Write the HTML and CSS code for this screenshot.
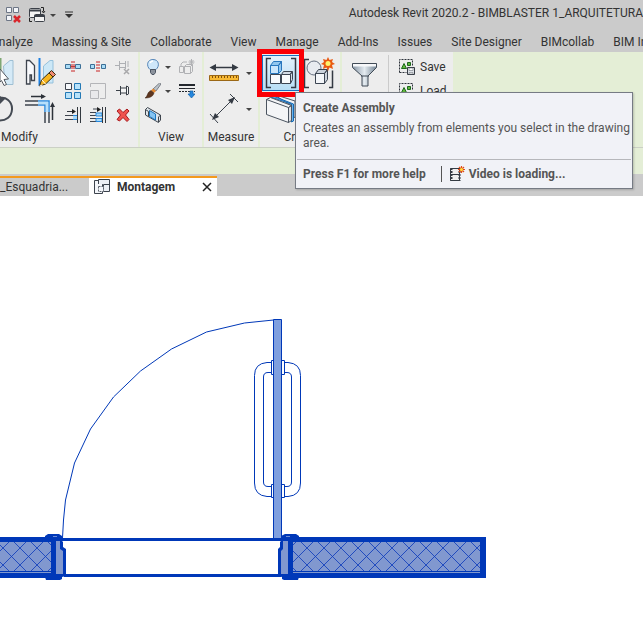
FILE: index.html
```html
<!DOCTYPE html>
<html lang="en">
<head>
<meta charset="utf-8">
<title>Autodesk Revit 2020.2</title>
<link rel="stylesheet" href="styles.css">
</head>
<body>
<header class="titlebar">
  <div class="quick">
    <button class="quick-btn" aria-label="Close inactive views">
      <svg width="18" height="18" viewBox="0 0 18 18"><g fill="#f3f5f9" stroke="#6d7686"><path d="M2.500 1.500h5v5h-5zM9.500 1.500h5v5h-5zM2.500 9.500h5v5h-5z"/></g><path d="M10 10l6 6M16 10l-6 6" stroke="#d8262c" stroke-width="2.500"/></svg>
    </button>
    <button class="quick-btn" aria-label="Switch windows">
      <svg width="18" height="18" viewBox="0 0 18 18"><g fill="#f3f3f3" stroke="#3b4048"><rect x="1.500" y="2.500" width="11" height="9" rx="1"/><path d="M1.500 4.500h11" stroke-width="2"/><rect x="6.500" y="8.500" width="10" height="7" rx="1"/><path d="M6.500 10h10" stroke-width="2"/></g><path d="M13 1.500h2.500v4M14 5l1.500 2L17 5M1.500 12v3.500H4" fill="none" stroke="#222"/></svg>
    </button>
    <button class="arrow-btn" aria-label="Window list"><span class="arrow"></span></button>
    <button class="arrow-btn" aria-label="Customize toolbar"><svg width="8" height="8" viewBox="0 0 8 8"><path d="M0 1h8" stroke="#333" stroke-width="1"/><path d="M0 3h8L4 7z" fill="#333"/></svg></button>
  </div>
  <h1 class="app-title">Autodesk Revit 2020.2 - BIMBLASTER 1_ARQUITETURA</h1>
</header>

<nav class="tabs" aria-label="Ribbon tabs">
  <a href="#">Analyze</a><a href="#">Massing &amp; Site</a><a href="#">Collaborate</a><a href="#">View</a><a href="#">Manage</a><a href="#">Add-Ins</a><a href="#">Issues</a><a href="#">Site Designer</a><a href="#">BIMcollab</a><a href="#">BIM Interoperability</a>
</nav>

<section class="ribbon" aria-label="Ribbon">
  <div class="panel modify">
    <div class="panel-body">
      <div class="big-col first">
        <button aria-label="Mirror pick axis"><svg width="16" height="32" viewBox="0 0 16 32"><path d="M0 1h1.500v14H0z" fill="#7fa874"/><path d="M3.500 9L10 3.500h3v24H5z" fill="#d5eaf7" stroke="#9ebfd3"/><path d="M0 12l8.500 10-4.500.500 2.500 5-2.500 1-2.500-5L0 25z" fill="#fff" stroke="#555a62"/></svg></button>
        <button aria-label="Rotate"><svg width="16" height="32" viewBox="0 0 16 32"><path d="M-3 6C6 2 12.500 9 12 16.500S6 28-2 27.500" fill="none" stroke="#454b54" stroke-width="2"/><path d="M0 3l5 3-5 5z" fill="#454b54"/></svg></button>
      </div>
      <div class="big-col">
        <button aria-label="Mirror draw axis"><svg width="32" height="32" viewBox="0 0 32 32"><path d="M2.500 3.500h3l5 5v15h-3v-5.500h-1.500v9h-3.500z" fill="#f8f9fc" stroke="#3e444e" stroke-width="1.300"/><path d="M29 3.500h-3L19.500 9v17H29z" fill="#cce8f7" stroke="#95c1dc"/><path d="M15.500 1v28" stroke="#1d7fe0" stroke-width="2"/><path d="M15.500 29l2-6L27 14l4 4-9.500 9z" fill="#f7b51e" stroke="#3a2c10"/><path d="M18 23l3.500 4M15.500 29l3-1" stroke="#fff"/><path d="M25 16l2.500-2.500 4 4L29 20z" fill="#ef8a72" stroke="#3a2c10"/></svg></button>
        <button aria-label="Trim or extend to corner"><svg width="32" height="32" viewBox="0 0 32 32"><g fill="none" stroke-width="1.500"><path d="M1 8h13M1 12h13M21 19v11M25 19v11" stroke="#3e444e"/><path d="M14 8h11v11M14 12h7v7" stroke="#2688de"/><path d="M14 10h9v9" stroke="#b7e0fb" stroke-width="2.500"/><path d="M7 3.500h13M28.500 27V13" stroke="#2d3239"/></g><path d="M17 1l5 2.500L17 6zM26 14l2.500-5 2.500 5z" fill="#2d3239"/></svg></button>
      </div>
      <div class="small-grid">
        <button aria-label="Split element"><svg width="16" height="16" viewBox="0 0 16 16"><path d="M.500 5.500h5v4h-5zM10.500 5.500h5v4h-5z" fill="#a9dcf6" stroke="#3c6f96"/><path d="M5.500 7.500h5" stroke="#c43a3a"/><path d="M7 2v11M9 2v11" stroke="#c92222" stroke-dasharray="2 1"/></svg></button>
        <button aria-label="Split with gap"><svg width="16" height="16" viewBox="0 0 16 16"><path d="M.500 5.500h4v4h-4zM11.500 5.500h4v4h-4z" fill="#a9dcf6" stroke="#3c6f96"/><path d="M7 2v11M9 2v11" stroke="#c92222" stroke-dasharray="2 1"/></svg></button>
        <button aria-label="Unpin"><svg width="16" height="16" viewBox="0 0 16 16"><path d="M0 6.500h4M4.500 2v9M4.500 4.500h6v4h-6M10.500 2v8M13 2v6" fill="none" stroke="#aeb0b4"/><path d="M9 10l5 5M14 10l-5 5" stroke="#a8a8aa" stroke-width="1.500"/></svg></button>
        <button aria-label="Array"><svg width="16" height="16" viewBox="0 0 16 16"><path d="M.500.500h6v6h-6z" fill="#f6f8fb" stroke="#3e444e"/><path d="M9.500.500h6v6h-6zM.500 9.500h6v6h-6zM9.500 9.500h6v6h-6z" fill="#b8e2fa" stroke="#2479b5"/></svg></button>
        <button aria-label="Scale"><svg width="16" height="16" viewBox="0 0 16 16"><path d="M.500 4V.500h15v15H10" fill="none" stroke="#b4b5b8"/><path d="M.500 7.500h8v8h-8z" fill="#e9e9eb" stroke="#b4b5b8"/></svg></button>
        <button aria-label="Pin"><svg width="16" height="16" viewBox="0 0 16 16"><path d="M1 7.500h4M5.500 3v9M5.500 5h6v5h-6M11.500 3v9l2-1V4z" fill="#f5f5f5" stroke="#3a4048"/></svg></button>
        <button aria-label="Trim single element"><svg width="16" height="16" viewBox="0 0 16 16"><path d="M0 8.500h8M0 12.500h8" stroke="#3e444e"/><path d="M8 8.500h4M8 12.500h4" stroke="#2688de"/><path d="M8 10.500h4" stroke="#a8d9f7" stroke-width="3"/><path d="M12.500 0v16M15.500 0v16M2 4.500h7" stroke="#333940"/><path d="M7 2l4 2.500L7 7z" fill="#222"/></svg></button>
        <button aria-label="Trim multiple elements"><svg width="16" height="16" viewBox="0 0 16 16"><path d="M0 5.500h6M0 8.500h6M0 11.500h6M0 14.500h6M3 2h6" stroke="#3e444e"/><path d="M6 6h6v3H6zM6 11.500h6v3H6z" fill="#a8d9f7" stroke="#2688de"/><path d="M12.500 0v16M15.500 0v16" stroke="#333940"/><path d="M7 0l4 2.500L7 5z" fill="#222"/></svg></button>
        <button aria-label="Delete"><svg width="16" height="16" viewBox="0 0 16 16"><path d="M2 4l2.500-2L8 5.500 12 2l2 2-3.500 4 3.500 4.500-2 2L8 10.500 4.500 14 2 12.500 5.500 8z" fill="#f0534f" stroke="#a8181c"/></svg></button>
      </div>
    </div>
    <h2>Modify</h2>
  </div>

  <div class="panel view">
    <div class="panel-body">
      <div class="view-grid">
        <button aria-label="Hide in view"><svg width="16" height="16" viewBox="0 0 16 16"><path d="M5 10.500C1 7 2 .500 8 .500s7 6.500 3 10z" fill="#cfe7fa" stroke="#5686b8"/><path d="M5 4q1-2 3-2" stroke="#fff" fill="none" stroke-width="1.500"/><path d="M5.500 10.500h5v3l-1.500 2H7l-1.500-2z" fill="#8b929c" stroke="#4b5462"/></svg></button>
        <button aria-label="Hide options"><span class="arrow"></span></button>
        <button aria-label="Displace elements"><svg width="16" height="16" viewBox="0 0 16 16"><path d="M.500 7.500h4v6h-4zM5.500 7.500l2-2h6v7l-2 2h-6zM5.500 7.500h6v7M11.500 7.500l2-2M2 7V5l2-2h4" fill="none" stroke="#b0b1b4"/><path d="M12.500 0v6M9.500 3h6M10.500 1l4 4M14.500 1l-4 4" stroke="#b0b1b4"/></svg></button>
        <button aria-label="Override graphics"><svg width="16" height="16" viewBox="0 0 16 16"><path d="M14.500 0l1.500 1-5 7-3-2z" fill="#bcc3ca" stroke="#565c64" stroke-width=".700"/><path d="M8 5.500L11 8 9 10 6 7.500z" fill="#e78a31"/><path d="M6 7.500L9 10c-1 4-5 5-9 5 3-2 2-6 6-7.500z" fill="#5d351f" stroke="#3d2519" stroke-width=".500"/></svg></button>
        <button aria-label="Override options"><span class="arrow"></span></button>
        <button aria-label="Linework"><svg width="16" height="16" viewBox="0 0 16 16"><path d="M0 2h16" stroke="#24282e" stroke-width="2"/><path d="M0 5.500h16" stroke="#24282e"/><path d="M0 8.500h16" stroke="#24282e" stroke-dasharray="2 1"/><path d="M11 8h3v3h2l-3.500 4L9 11h2z" fill="#2688de" stroke="#1261aa" stroke-width=".700"/></svg></button>
        <button aria-label="Selection box"><svg width="16" height="16" viewBox="0 0 16 16"><path d="M.500 2.500l2-2L15.500 8v5l-2 2.500L.500 8z" fill="#dfe5ea" stroke="#3d444d"/><path d="M4.500 3.500l6 3.500v6l-6-3.500z" fill="#86c4f2" stroke="#1c76c0"/><path d="M.500 2.500l3 2v5M13.500 15v-5l2-2" fill="none" stroke="#3d444d"/></svg></button>
      </div>
    </div>
    <h2>View</h2>
  </div>

  <div class="panel measure">
    <div class="panel-body">
      <div class="measure-grid">
        <button aria-label="Measure between two references"><svg width="32" height="32" viewBox="0 0 32 32"><path d="M5 10.500h22" stroke="#343a43" stroke-width="1.500"/><path d="M1.500 10.500L8 7v7zM30.500 10.500L24 7v7z" fill="#343a43"/><path d="M1.500 18.500h29v5h-29z" fill="#f7b934" stroke="#9b6816"/><path d="M4.500 19v2M7.500 19v2M10.500 19v2M13.500 19v2M16.500 19v2M19.500 19v2M22.500 19v2M25.500 19v2M28.500 19v2" stroke="#80500c"/></svg></button>
        <button aria-label="Measure options"><span class="arrow"></span></button>
        <button aria-label="Aligned dimension"><svg width="32" height="32" viewBox="0 0 32 32"><path d="M6 25L25 6M2 21l8 9M22 1l8 8" stroke="#3b424c"/><path d="M4 27l3-7 4 4zM27 4l-7 3 4 4z" fill="#343a43"/></svg></button>
        <button aria-label="Dimension options"><span class="arrow"></span></button>
      </div>
    </div>
    <h2>Measure</h2>
  </div>

  <div class="panel create">
    <div class="panel-body">
      <div class="create-grid">
        <button class="active" aria-label="Create assembly"><svg width="32" height="32" viewBox="0 0 32 32"><path d="M6 1.500H1.500v29H6M26 1.500h4.500v29H26" fill="none" stroke="#343a43" stroke-width="1.500"/><g stroke="#3c4552" stroke-linejoin="round"><path d="M16.500 17.500l2-3H27l-2 3zM25.500 17.500l2-3v8l-2 4z" fill="#d3dbe5"/><path d="M5.500 17.500h10v9h-10zM16.500 17.500h9v9h-9z" fill="#f8fafc"/><path d="M5.500 8.500h8v8h-8z" fill="#c9e6fc" stroke="#2776bd"/><path d="M5.500 8.500l3-4h8l-3 4zM13.500 8.500l3-4v9l-3 3z" fill="#91c7ef" stroke="#2776bd"/></g></svg></button>
        <button aria-label="Create group"><svg width="32" height="32" viewBox="0 0 32 32"><path d="M6 2.500H1.500v28H6M26 30.500h3.500v-17" fill="none" stroke="#343a43" stroke-width="1.500"/><circle cx="11" cy="11" r="7" fill="#e8ebf0" stroke="#667080"/><g fill="#f4f6f9" stroke="#3c4552" stroke-linejoin="round"><path d="M12.500 16.500h9v10h-9z"/><path d="M12.500 16.500l3-4h9l-3 4zM21.500 16.500l3-4v10l-3 4z" fill="#ccd3dc"/></g><path d="M25 0l1.500 3L30 2l-1 3 3 2-3 1 1 4-3.500-1.500L25 14l-1.500-3.500L20 12l1-4-3-1 3-2-1-3 3.500 1z" fill="#e95a13"/><circle cx="25" cy="6.500" r="2.500" fill="#fff36c"/></svg></button>
        <button aria-label="Create similar"><svg width="32" height="32" viewBox="0 0 32 32"><path d="M8 1l22 7v16l-3 2V13z" fill="#f0f2f5" stroke="#4b5460"/><path d="M5.500 4V2l23 9v17l-2 1V11z" fill="#66b3ef" stroke="#1768b0"/><path d="M1.500 6.500l4-2 21 8-3 2v15l-22-8z" fill="#f4f5f7" stroke="#4b5460"/><path d="M1.500 6.500l22 8 3-2v15l-3 2v-15" fill="#cdd4dd" fill-opacity=".5" stroke="#4b5460"/></svg></button>
      </div>
    </div>
    <h2>Create</h2>
  </div>

  <div class="panel select">
    <div class="panel-body">
      <button class="filter" aria-label="Filter"><svg width="32" height="32" viewBox="0 0 32 32"><defs><linearGradient id="steel"><stop offset="0" stop-color="#8796a5"/><stop offset=".5" stop-color="#e4ebf0"/><stop offset="1" stop-color="#718292"/></linearGradient></defs><path d="M3.500 6.500h24v4L19 19v10h-6V19l-9.500-8.500z" fill="url(#steel)" stroke="#414b56"/><path d="M4 7h23v2.500H4z" fill="#f7f8fa"/><path d="M12 19h8" stroke="#414b56"/></svg></button>
      <div class="selection-list">
        <button class="labelled"><svg width="16" height="16" viewBox="0 0 16 16"><path d="M.500 13.500V.500h13v6M.500 13.500h7" fill="none" stroke="#2c323a" stroke-dasharray="2 1"/><path d="M5 4.500l2.500 5h-5zM8.500 3.500h3v3h-3z" fill="#62b73c" stroke="#1d681c"/><path d="M8.500 8.500h7v7h-7z" fill="#dfe3e8" stroke="#363c44"/><path d="M10 9h4v2.500h-4zM10 13.500h4V15h-4z" fill="#fff" stroke="#59606a" stroke-width=".500"/></svg>Save</button>
        <button class="labelled"><svg width="16" height="16" viewBox="0 0 16 16"><path d="M.500 13.500V.500h13v6M.500 13.500h7" fill="none" stroke="#2c323a" stroke-dasharray="2 1"/><path d="M5 4.500l2.500 5h-5zM8.500 3.500h3v3h-3z" fill="#62b73c" stroke="#1d681c"/></svg>Load</button>
      </div>
    </div>
  </div>

  <aside class="tooltip" role="tooltip">
    <h3>Create Assembly</h3>
    <p>Creates an assembly from elements you select in the drawing area.</p>
    <footer>
      <span>Press F1 for more help</span>
      <span class="video"><svg width="16" height="16" viewBox="0 0 16 16"><path d="M1.500 2.500h9v12h-9z" fill="#eee" stroke="#353b43"/><path d="M2.500 2v13M10.500 2v13" stroke="#353b43" stroke-width="2" stroke-dasharray="2 1"/><path d="M3 8.500h7" stroke="#353b43"/><path d="M12.500 0v7M9 3.500h7M10 1l5 5M15 1l-5 5" stroke="#e04b16" stroke-width="1.200"/><circle cx="12.500" cy="3.500" r="1.500" fill="#ffdf39"/></svg>Video is loading...</span>
    </footer>
  </aside>
</section>

<div class="options-bar"></div>

<nav class="documents" aria-label="Open views">
  <button class="doc">_Esquadria...</button>
  <div class="doc current">
    <svg width="16" height="16" viewBox="0 0 16 16"><path d="M.500 1.500h8v13h-8z" fill="#f4f6fa" stroke="#3c434d"/><path d="M4.500 5V.500h11v12h-6v-7h6" fill="#edf0f5" stroke="#3c434d"/><path d="M4.500 7.500h5v5h-5z" fill="#f4f6fa" stroke="#5b626c" stroke-dasharray="2 1"/></svg>
    <span>Montagem</span>
    <button aria-label="Close view"><svg width="10" height="10" viewBox="0 0 10 10"><path d="M1 1l8 8M9 1L1 9" stroke="#222" stroke-width="1.500"/></svg></button>
  </div>
</nav>

<main class="canvas">
  <svg width="643" height="443" viewBox="0 196 643 443" role="img" aria-label="Plan of a door in a wall">
    <defs>
      <pattern id="hatch-left" x="20" y="548" width="17" height="17" patternUnits="userSpaceOnUse"><path d="M0 0l17 17M17 0L0 17" stroke="#0a39bb" stroke-width=".8"/></pattern>
      <pattern id="hatch-right" x="307" y="548" width="17" height="17" patternUnits="userSpaceOnUse"><path d="M0 0l17 17M17 0L0 17" stroke="#0a39bb" stroke-width=".8"/></pattern>
    </defs>
    <g fill="none" stroke="#0038b8">
      <path d="M62.500 538l1-18 2-20 9-37 16-34 23-32 27-26 31-22 35-17 38-9 29-3"/>
      <path d="M271 362.500h-4q-12.500 1-12.500 13V483q0 12.500 12.500 13.500h4M284 362.500h4q12.500 1 12.500 13V483q0 12.500-12.500 13.500h-4"/>
      <path d="M271 372.500h-3q-4.500 0-4.500 4.500v105q0 4.500 4.500 4.500h3M284 372.500h3q4.500 0 4.500 4.500v105q0 4.500-4.500 4.500h-3"/>
      <path d="M271.500 360.500h13v14h-13zM271.500 484.500h13v13h-13z" fill="#fff"/>
      <path d="M273.500 319.500h8V539h-8z" fill="#7f9fde"/>
    </g>
    <path d="M60 539.500h223M64 575.500h217" stroke="#0038b8" stroke-width="3"/>
    <g fill="#0038b8">
      <path d="M0 537h56v41H0zM288 537h198v41H288z"/>
      <path d="M45 536l3-2h11l3 2v5l1 1v5l3 2v27l-4 1v2l-2 1H46l-1-3zM299 536l-3-2h-11l-4 2v5l-1 1v5l-2 2v27l4 1v2l2 1h14l1-3z"/>
    </g>
    <g fill="#8198cf">
      <path d="M0 542h51v31H0zM293 542h187v31H293z"/>
      <path d="M56 541h4v8l3 2v23h-7zM288 541h-5v8l-2 2v23h7z"/>
    </g>
    <path d="M0 542h51v29H0z" fill="url(#hatch-left)"/>
    <path d="M293 542h187v29H293z" fill="url(#hatch-right)"/>
    <path d="M0 571.500h51M293 571.500h187" stroke="#0038b8"/>
    <path d="M53 536.500h4M286 536.500h4" stroke="#6f8ed6"/>
  </svg>
</main>
</body>
</html>
```
FILE: styles.css
```css
* { box-sizing: border-box; }

body {
  margin: 0;
  overflow: hidden;
  background: #fff;
  color: #333;
  font: 12px/16px Roboto, "Open Sans", sans-serif;
}

h1, h2, h3, p { margin: 0; font: inherit; }

button {
  display: flex;
  align-items: center;
  justify-content: center;
  padding: 0;
  border: 0;
  background: none;
  color: inherit;
  font: inherit;
}

svg { display: block; flex: none; }

.titlebar {
  display: flex;
  justify-content: space-between;
  height: 28px;
  background: #cbcbcb;
  overflow: hidden;
  white-space: nowrap;
}

.quick { display: flex; align-items: center; padding: 2px 0 0 1px; }
.quick-btn { width: 24px; }
.arrow-btn { width: 8px; }
.arrow-btn + .arrow-btn { margin-left: 8px; }

.arrow {
  border: 3px solid transparent;
  border-top-color: #444;
  border-bottom: 0;
}

.app-title { padding-top: 5px; }

.tabs {
  display: flex;
  gap: 19px;
  height: 24px;
  padding-top: 6px;
  background: #cbcbcb;
  overflow: hidden;
  white-space: nowrap;
}
.tabs a { color: #333; text-decoration: none; }
.tabs a:first-child { margin-left: -9px; }

.ribbon {
  position: relative;
  display: flex;
  gap: 2px;
  height: 95px;
  background: #e4eed6;
}

.panel { background: #ededed; padding-top: 3px; }
.panel-body { display: flex; height: 72px; }
.panel h2 { line-height: 20px; text-align: center; }

.modify { width: 138px; }
.modify h2 { width: 39px; }
.big-col { width: 40px; }
.big-col.first { width: 20px; }
.big-col button { width: 100%; height: 36px; }
.big-col.first button { justify-content: flex-start; }
.small-grid { display: grid; grid-template: repeat(3, 24px) / repeat(3, 25px); }

.view { width: 62px; padding-left: 4px; }
.view h2 { padding-right: 4px; }
.view-grid { display: grid; grid-template: repeat(3, 24px) / 17px 14px 24px; }

.measure { width: 54px; padding-left: 4px; }
.measure h2 { margin-left: -4px; }
.measure-grid { display: grid; grid-template: repeat(2, 36px) / 32px 18px; }

.create { width: 80px; padding-left: 2px; }
.create-grid { display: grid; grid-template: repeat(2, 36px) / repeat(2, 38px); }
.active {
  position: relative;
  background: linear-gradient(#e4f2fb, #b8def5);
  border: 1px solid #1671bd;
}
.active::after {
  content: "";
  position: absolute;
  inset: -7px -5px -7px -6px;
  border: 5px solid #fa0006;
}

.select { width: 111px; }
.filter { width: 46px; height: 36px; }
.selection-list {
  height: 72px;
  padding-left: 10px;
  border-left: 1px solid #cbcbcb;
}
.labelled { height: 24px; gap: 5px; }

.tooltip {
  position: absolute;
  z-index: 1;
  top: 40px;
  left: 295px;
  width: 338px;
  padding: 7px 0 0;
  border: 1px solid #767b84;
  background: #f1f2f7;
  color: #555;
  box-shadow: 1px 1px 2px #0003;
}
.tooltip h3 { padding: 0 7px; font-weight: 700; }
.tooltip p { padding: 5px 0 0 7px; line-height: 15px; }
.tooltip footer {
  display: flex;
  gap: 15px;
  margin: 8px 1px 0;
  padding: 6px;
  border-top: 1px solid #b6b7bb;
  font-weight: 700;
}
.video {
  display: flex;
  gap: 4px;
  padding-left: 7px;
  border-left: 1px solid #555;
}

.options-bar {
  height: 27px;
  border-top: 1px solid #cbd0c5;
  background: #e4eed6;
}

.documents {
  display: flex;
  height: 22px;
  padding-top: 2px;
  background: #cbcbcb;
}
.doc { height: 20px; border-top: 2px solid #f39a1e; }
button.doc { width: 89px; justify-content: flex-start; }
.current {
  display: flex;
  align-items: center;
  width: 128px;
  padding: 0 5px;
  background: #fff;
  font-weight: 700;
}
.current span { flex: 1; padding-left: 7px; }

.canvas { overflow: hidden; }
```
